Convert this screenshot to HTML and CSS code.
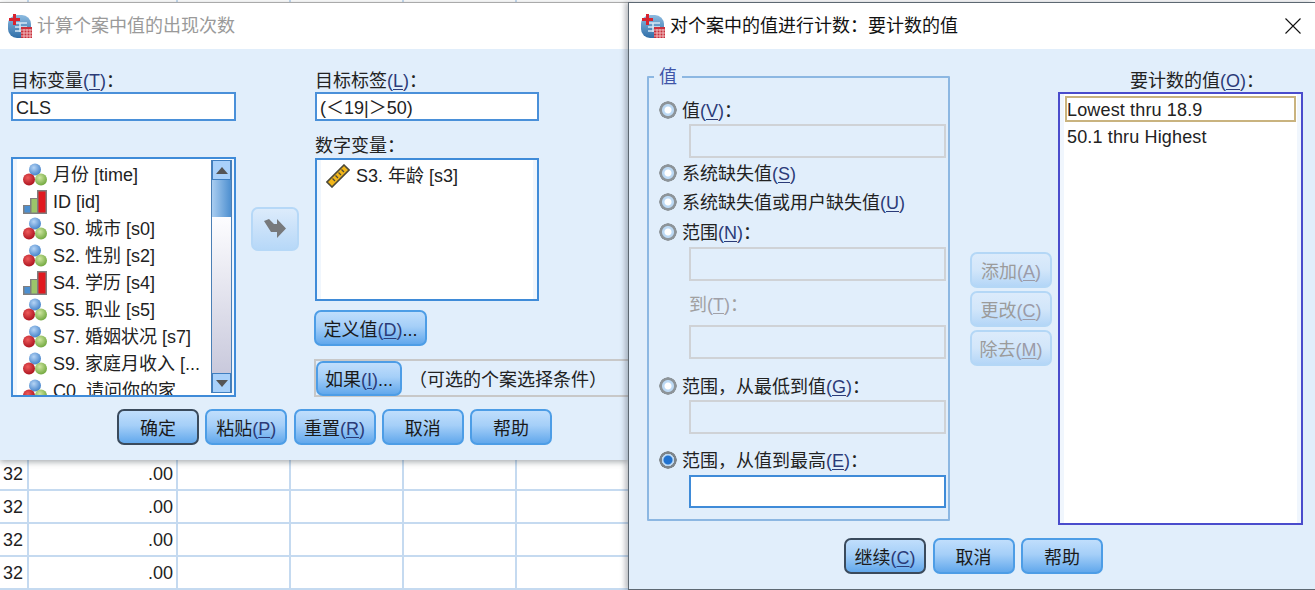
FILE: index.html
```html
<!DOCTYPE html>
<html lang="zh-CN">
<head>
  <meta charset="UTF-8">
  <title>计算个案中值的出现次数</title>
  <link rel="stylesheet" href="styles.css">
</head>
<body>

<svg class="defs" width="0" height="0" aria-hidden="true">
  <defs>
    <radialGradient id="gBlue" cx="40%" cy="35%" r="70%"><stop offset="0" stop-color="#b5d4f5"/><stop offset="1" stop-color="#3f7fc8"/></radialGradient>
    <radialGradient id="gRed" cx="40%" cy="35%" r="70%"><stop offset="0" stop-color="#ee5a5a"/><stop offset="1" stop-color="#a80f1c"/></radialGradient>
    <radialGradient id="gGreen" cx="40%" cy="35%" r="70%"><stop offset="0" stop-color="#cfe6a0"/><stop offset="1" stop-color="#6da53a"/></radialGradient>
    <linearGradient id="gApp" x1="0" y1="0" x2="0" y2="1"><stop offset="0" stop-color="#8dbbe0"/><stop offset="1" stop-color="#2f6ea8"/></linearGradient>
    <symbol id="nominal" viewBox="0 0 24 24">
      <circle cx="12" cy="6.500" r="6" fill="url(#gBlue)"/>
      <circle cx="18" cy="16.500" r="6" fill="url(#gGreen)"/>
      <circle cx="6" cy="16.500" r="6" fill="url(#gRed)"/>
    </symbol>
    <symbol id="ordinal" viewBox="0 0 24 24">
      <path d="M0 24V15H7V8H14V0H24V24Z" fill="#807f7f"/>
      <rect x="1.500" y="16" width="5.500" height="6.500" fill="#4c8fd0"/>
      <rect x="8.500" y="9" width="5.500" height="13.500" fill="#9cc56a"/>
      <rect x="15.500" y="1.500" width="7" height="21" fill="#e0191f"/>
    </symbol>
    <symbol id="scale" viewBox="0 0 24 24">
      <path d="M18 1L23 6L6 23L1 18Z" fill="#f2b619" stroke="#4d4a3a" stroke-width="1.600"/>
      <path d="M15.500 5.500L18 8M12.500 8.500L15 11M9.500 11.500L12 14M6.500 14.500L9 17" stroke="#4d4a3a" stroke-width="1.300" fill="none"/>
    </symbol>
    <symbol id="app" viewBox="0 0 24 24">
      <rect x="0" y="1" width="23" height="23" rx="9" fill="url(#gApp)"/>
      <path d="M7 9H19M7 13H19M12 9V18M7 17H14" stroke="#d6e8f6" stroke-width="1.500" fill="none"/>
      <path d="M5 0H8V4H12V7H8V11H5V7H1V4H5Z" fill="#d8232f"/>
      <rect x="13" y="13" width="11" height="11" fill="#c9303c"/>
      <path d="M13 16H24M13 19H24M13 22H24M16 15V24M19 15V24M22 15V24" stroke="#f3c6c8" stroke-width="0.900" fill="none"/>
    </symbol>
  </defs>
</svg>

<!-- data sheet behind the dialogs -->
<div class="sheet">
  <div class="sheet-top">
    <span class="cell c-id"></span><span class="cell c-val"></span><span class="cell c-e"></span><span class="cell c-e"></span><span class="cell c-e"></span>
  </div>
  <div class="sheet-row"><span class="cell c-id">32</span><span class="cell c-val">.00</span><span class="cell c-e"></span><span class="cell c-e"></span><span class="cell c-e"></span></div>
  <div class="sheet-row"><span class="cell c-id">32</span><span class="cell c-val">.00</span><span class="cell c-e"></span><span class="cell c-e"></span><span class="cell c-e"></span></div>
  <div class="sheet-row"><span class="cell c-id">32</span><span class="cell c-val">.00</span><span class="cell c-e"></span><span class="cell c-e"></span><span class="cell c-e"></span></div>
  <div class="sheet-row"><span class="cell c-id">32</span><span class="cell c-val">.00</span><span class="cell c-e"></span><span class="cell c-e"></span><span class="cell c-e"></span></div>
</div>

<!-- main dialog -->
<section class="win win-count">
  <header class="titlebar inactive">
    <svg class="app-icon"><use href="#app"/></svg>
    <span>计算个案中值的出现次数</span>
  </header>
  <div class="count-body">
    <div class="count-top">
      <div class="col-left">
        <label class="lbl">目标变量<span class="key">(<u>T</u>)</span>：</label>
        <div class="input">CLS</div>
        <div class="list var-list">
          <div class="var-items">
            <div class="var"><svg><use href="#nominal"/></svg>月份 [time]</div>
            <div class="var"><svg><use href="#ordinal"/></svg>ID [id]</div>
            <div class="var"><svg><use href="#nominal"/></svg>S0. 城市 [s0]</div>
            <div class="var"><svg><use href="#nominal"/></svg>S2. 性别 [s2]</div>
            <div class="var"><svg><use href="#ordinal"/></svg>S4. 学历 [s4]</div>
            <div class="var"><svg><use href="#nominal"/></svg>S5. 职业 [s5]</div>
            <div class="var"><svg><use href="#nominal"/></svg>S7. 婚姻状况 [s7]</div>
            <div class="var"><svg><use href="#nominal"/></svg>S9. 家庭月收入 [...</div>
            <div class="var"><svg><use href="#nominal"/></svg>C0. 请问你的家</div>
          </div>
          <div class="scrollbar">
            <div class="sb-btn"><i class="tri-up"></i></div>
            <div class="sb-thumb"></div>
            <div class="sb-track"></div>
            <div class="sb-btn"><i class="tri-down"></i></div>
          </div>
        </div>
      </div>
      <div class="col-mid">
        <div class="arrow-btn">
          <svg width="24" height="22" viewBox="0 0 24 22"><path d="M1 3L6 1L11 6H14V1L23 10.500L14 20V14H8Z" fill="#77797c"/></svg>
        </div>
      </div>
      <div class="col-right">
        <label class="lbl">目标标签<span class="key">(<u>L</u>)</span>：</label>
        <div class="input">(＜19|＞50)</div>
        <label class="lbl lbl-num">数字变量：</label>
        <div class="list num-list">
          <div class="var"><svg><use href="#scale"/></svg>S3. 年龄 [s3]</div>
        </div>
        <button class="btn btn-define">定义值<span class="key">(<u>D</u>)</span>...</button>
        <div class="if-panel">
          <button class="btn btn-if">如果<span class="key">(<u>I</u>)</span>...</button>
          <span class="if-note">（可选的个案选择条件）</span>
        </div>
      </div>
    </div>
    <div class="btn-row count-btns">
      <button class="btn is-default">确定</button>
      <button class="btn">粘贴<span class="key">(<u>P</u>)</span></button>
      <button class="btn">重置<span class="key">(<u>R</u>)</span></button>
      <button class="btn">取消</button>
      <button class="btn">帮助</button>
    </div>
  </div>
</section>

<!-- values to count dialog -->
<section class="win win-values">
  <header class="titlebar">
    <svg class="app-icon"><use href="#app"/></svg>
    <span>对个案中的值进行计数：要计数的值</span>
    <svg class="close" width="16" height="16" viewBox="0 0 16 16"><path d="M0.500 0.500L15.500 15.500M15.500 0.500L0.500 15.500" stroke="#111" stroke-width="1.100" fill="none"/></svg>
  </header>
  <div class="values-body">
    <div class="values-top">
      <fieldset class="group">
        <legend>值</legend>
        <div class="opt"><i class="radio"></i>值<span class="key">(<u>V</u>)</span>：</div>
        <div class="field"></div>
        <div class="opt mt-2"><i class="radio"></i>系统缺失值<span class="key">(<u>S</u>)</span></div>
        <div class="opt mt-3"><i class="radio"></i>系统缺失值或用户缺失值<span class="key">(<u>U</u>)</span></div>
        <div class="opt mt-4"><i class="radio"></i>范围<span class="key">(<u>N</u>)</span>：</div>
        <div class="field mt-2"></div>
        <div class="opt opt-to">到<span class="key">(<u>T</u>)</span>：</div>
        <div class="field mt-8"></div>
        <div class="opt mt-14"><i class="radio"></i>范围，从最低到值<span class="key">(<u>G</u>)</span>：</div>
        <div class="field"></div>
        <div class="opt mt-13"><i class="radio on"></i>范围，从值到最高<span class="key">(<u>E</u>)</span>：</div>
        <div class="field active mt-2"></div>
      </fieldset>
      <div class="side-btns">
        <button class="btn" disabled>添加<span class="key">(<u>A</u>)</span></button>
        <button class="btn" disabled>更改<span class="key">(<u>C</u>)</span></button>
        <button class="btn" disabled>除去<span class="key">(<u>M</u>)</span></button>
      </div>
      <div class="col-values">
        <label class="lbl lbl-values">要计数的值<span class="key">(<u>O</u>)</span>：</label>
        <div class="list values-list">
          <div class="val selected">Lowest thru 18.9</div>
          <div class="val">50.1 thru Highest</div>
        </div>
      </div>
    </div>
    <div class="btn-row values-btns">
      <button class="btn is-default">继续<span class="key">(<u>C</u>)</span></button>
      <button class="btn">取消</button>
      <button class="btn">帮助</button>
    </div>
  </div>
</section>

</body>
</html>
```

FILE: styles.css
```css
* {
  box-sizing: border-box;
}
html, body {
  margin: 0;
  width: 1315px;
  height: 590px;
  overflow: hidden;
}
body {
  position: relative;
  background: #fff;
  color: #222;
  font-family: "Liberation Sans", "Noto Sans CJK SC", sans-serif;
  font-size: 18px;
  line-height: 26px;
}
.defs {
  position: absolute;
}
u {
  text-underline-offset: 2px;
}
.key {
  color: #2b3b78;
}

/* sheet */
.sheet {
  width: 640px;
}
.sheet-top {
  display: flex;
  height: 3px;
  margin-bottom: 455px;
  border-bottom: 1px solid #aaa;
}
.sheet-row {
  display: flex;
  height: 33px;
  border-bottom: 2px solid #c5daf0;
}
.cell {
  display: block;
  height: 100%;
  line-height: 32px;
  border-right: 2px solid #c5daf0;
}
.c-id {
  width: 29px;
  padding-left: 3px;
}
.c-val {
  width: 149px;
  padding-right: 3px;
  text-align: right;
}
.c-e {
  width: 113px;
}

/* windows */
.win {
  position: absolute;
}
.win-count {
  left: 0;
  top: 2px;
  width: 628px;
  height: 458px;
  border-top: 1px solid #aaa;
  box-shadow: 0 2px 6px rgba(60, 70, 80, 0.45);
}
.win-values {
  left: 628px;
  top: 2px;
  width: 687px;
  height: 588px;
  border: 1px solid #5d6872;
  border-right: none;
  box-shadow: -3px 0 5px rgba(60, 70, 80, 0.35);
}
.titlebar {
  display: flex;
  align-items: center;
  height: 46px;
  padding-left: 8px;
  background: #fff;
  color: #111;
  line-height: 46px;
}
.titlebar.inactive {
  color: #9a9a9a;
}
.win-values .titlebar {
  padding-left: 12px;
}
.app-icon {
  width: 24px;
  height: 24px;
  margin-right: 5px;
  flex: none;
}
.close {
  margin-left: auto;
  margin-right: 14px;
}

/* buttons */
.btn {
  display: block;
  width: 82px;
  height: 36px;
  padding: 3px 0 0;
  border: 2px solid #4d9de6;
  border-radius: 7px;
  background: linear-gradient(#c0defc, #a5cff8 45%, #62a8ec);
  color: #1a1a1a;
  font: inherit;
  text-align: center;
  cursor: pointer;
}
.btn.is-default {
  border-color: #3a4a5c;
}
.btn:disabled {
  border-color: #b4d7f6;
  background: linear-gradient(#dcebfb, #d2e6fa 50%, #b4d6f7);
  color: #9b9b9b;
}
.btn:disabled .key {
  color: #9b9ba8;
}
.btn-row {
  display: flex;
}

/* shared fields */
.lbl {
  display: block;
  height: 23px;
  line-height: 25px;
}
.input {
  width: 225px;
  height: 29px;
  padding-left: 3px;
  border: 2px solid #4a90d9;
  background: #fff;
  line-height: 28px;
}
.list {
  border: 2px solid #3f8bd8;
  background: #fff;
  box-shadow: inset 4px 0 0 #f0f6fd, inset -4px 0 0 #f0f6fd;
  overflow: hidden;
}

/* main dialog */
.count-body {
  height: 411px;
  padding: 20px 0 0 11px;
  background: #e1eefb;
}
.count-top {
  display: flex;
  height: 328px;
}
.col-left {
  width: 225px;
}
.var-list {
  display: flex;
  width: 225px;
  height: 240px;
  margin-top: 36px;
}
.var-items {
  flex: 1;
  min-width: 0;
  padding: 2px 0 0 10px;
}
.var {
  display: flex;
  align-items: center;
  gap: 6px;
  height: 27px;
  white-space: nowrap;
}
.var svg {
  width: 24px;
  height: 24px;
  flex: none;
}
.scrollbar {
  display: flex;
  flex-direction: column;
  width: 21px;
  flex: none;
  margin: 1px 2px 2px 0;
  border: 1px solid #4b7fb5;
  border-width: 0 1px;
}
.sb-btn {
  display: flex;
  align-items: center;
  justify-content: center;
  height: 20px;
  background: #a9d1fa;
  border: 1px solid #3f7fc0;
}
.sb-thumb {
  height: 37px;
  background: linear-gradient(90deg, #a9cdf0, #4d8fd0);
}
.sb-track {
  flex: 1;
  background: linear-gradient(#fdfdff, #c9c9dc);
}
.tri-up, .tri-down {
  width: 0;
  height: 0;
  border-left: 6px solid transparent;
  border-right: 6px solid transparent;
}
.tri-up {
  border-bottom: 7px solid #555;
}
.tri-down {
  border-top: 7px solid #555;
}
.col-mid {
  width: 78px;
  padding: 138px 0 0 15px;
}
.arrow-btn {
  display: flex;
  align-items: center;
  justify-content: center;
  width: 48px;
  height: 44px;
  border: 2px solid #b6d8f7;
  border-radius: 7px;
  background: linear-gradient(#dcebfb, #b7d8f8);
}
.col-right {
  flex: 1;
  min-width: 0;
}
.col-right .lbl {
  margin-left: 1px;
}
.col-right .input {
  width: 224px;
  margin-left: 1px;
}
.lbl-num {
  margin-top: 14px;
  line-height: 23px;
}
.num-list {
  width: 224px;
  height: 143px;
  margin-left: 1px;
  padding: 2px 0 0 9px;
}
.btn-define {
  width: 113px;
  margin-top: 9px;
}
.if-panel {
  display: flex;
  align-items: center;
  height: 38px;
  margin-top: 13px;
  border: 1px solid #c8c8c8;
  border-right: none;
  border-width: 2px 0 2px 2px;
}
.btn-if {
  width: 86px;
  height: 35px;
}
.if-note {
  margin-left: 7px;
  padding-top: 3px;
  white-space: nowrap;
}
.count-btns {
  gap: 6.250px;
  margin-top: 12px;
  padding-left: 106px;
}

/* values dialog */
.values-body {
  height: 540px;
  padding-left: 18px;
  background: #e1eefb;
}
.values-top {
  display: flex;
  height: 475px;
}
.group {
  width: 303px;
  height: 457px;
  min-width: 0;
  margin: 15px 0 0;
  padding: 7px 4px 0 10px;
  border: 2px solid #8cb7e2;
  border-radius: 1px;
}
.group legend {
  margin-left: -5px;
  padding: 0 5px;
  color: #3f55a8;
  line-height: 26px;
}
.opt {
  display: flex;
  align-items: center;
  height: 26px;
  padding-top: 2px;
  white-space: nowrap;
}
.opt-to {
  margin: 10px 0 0 30px;
  color: #a0a0a0;
}
.opt-to .key {
  color: #a0a0a8;
}
.radio {
  width: 18px;
  height: 18px;
  margin: -2px 5px 0 0;
  flex: none;
  border-radius: 50%;
  background: radial-gradient(circle, #fff 0 3px, #bcd9f4 4px 5.500px, #8d9499 6.500px 8.500px, transparent 9px);
}
.radio.on {
  background: radial-gradient(circle, #2172cf 0 4px, #bcd9f4 5px 6px, #7d8489 6.500px 8.500px, transparent 9px);
}
.field {
  width: 257px;
  height: 34px;
  margin: 1px 0 0 30px;
  border: 2px solid #cfd2d6;
}
.field.active {
  height: 33px;
  border-color: #3f8bd8;
  background: #fff;
}
.field.mt-2 { margin-top: 2px; }
.field.mt-8 { margin-top: 8px; }
.mt-2 { margin-top: 2px; }
.mt-3 { margin-top: 3px; }
.mt-4 { margin-top: 4px; }
.mt-13 { margin-top: 13px; }
.mt-14 { margin-top: 14px; }
.side-btns {
  display: flex;
  flex-direction: column;
  gap: 3px;
  margin-left: 20px;
  padding-top: 203px;
}
.col-values {
  width: 245px;
  margin-left: 6px;
  padding-top: 20px;
}
.lbl-values {
  padding-left: 72px;
  white-space: nowrap;
}
.values-list {
  height: 433px;
  padding: 2px 5px;
  border-color: #4a4ccc;
}
.val {
  height: 27px;
  padding-left: 2px;
  line-height: 29px;
  letter-spacing: 0.150px;
  white-space: nowrap;
}
.val.selected {
  height: 26px;
  margin-bottom: 1px;
  padding-left: 0;
  border: 2px solid #c9b37f;
  line-height: 24px;
}
.values-btns {
  gap: 6.500px;
  margin-top: 14px;
  padding-left: 197px;
}
```
